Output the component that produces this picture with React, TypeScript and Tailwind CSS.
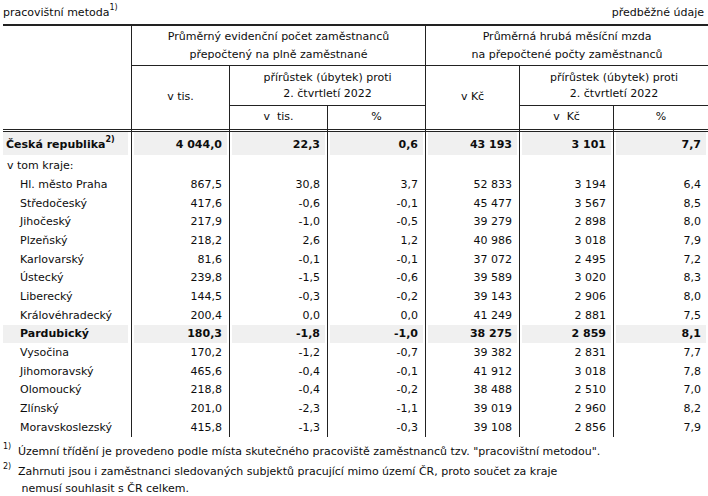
type Row = {
  name: string;
  values: string[];
  bold?: boolean;
};

const rows: Row[] = [
  { name: "Hl. město Praha", values: ["867,5", "30,8", "3,7", "52 833", "3 194", "6,4"] },
  { name: "Středočeský", values: ["417,6", "-0,6", "-0,1", "45 477", "3 567", "8,5"] },
  { name: "Jihočeský", values: ["217,9", "-1,0", "-0,5", "39 279", "2 898", "8,0"] },
  { name: "Plzeňský", values: ["218,2", "2,6", "1,2", "40 986", "3 018", "7,9"] },
  { name: "Karlovarský", values: ["81,6", "-0,1", "-0,1", "37 072", "2 495", "7,2"] },
  { name: "Ústecký", values: ["239,8", "-1,5", "-0,6", "39 589", "3 020", "8,3"] },
  { name: "Liberecký", values: ["144,5", "-0,3", "-0,2", "39 143", "2 906", "8,0"] },
  { name: "Královéhradecký", values: ["200,4", "0,0", "0,0", "41 249", "2 881", "7,5"] },
  { name: "Pardubický", values: ["180,3", "-1,8", "-1,0", "38 275", "2 859", "8,1"], bold: true },
  { name: "Vysočina", values: ["170,2", "-1,2", "-0,7", "39 382", "2 831", "7,7"] },
  { name: "Jihomoravský", values: ["465,6", "-0,4", "-0,1", "41 912", "3 018", "7,8"] },
  { name: "Olomoucký", values: ["218,8", "-0,4", "-0,2", "38 488", "2 510", "7,0"] },
  { name: "Zlínský", values: ["201,0", "-2,3", "-1,1", "39 019", "2 960", "8,2"] },
  { name: "Moravskoslezský", values: ["415,8", "-1,3", "-0,3", "39 108", "2 856", "7,9"] },
];

const line = "border-[#222]";

function Sup({ children }: { children: React.ReactNode }) {
  return <sup className="relative -top-[1px] align-super text-[8px] leading-none">{children}</sup>;
}

function RegionRow({ row }: { row: Row }) {
  const shade = row.bold ? "bg-[#f0f0f0]" : "";
  return (
    <tr className={`h-[18.7px] ${row.bold ? "font-bold" : ""}`}>
      <td className="p-0">
        <div className={`mr-[3px] pl-[17px] leading-[18px] ${shade}`}>{row.name}</div>
      </td>
      {row.values.map((v, i) => (
        <td key={i} className={`border-l p-0 ${line}`}>
          <div className={`mx-[2px] pr-[5px] text-right leading-[18px] ${shade}`}>{v}</div>
        </td>
      ))}
    </tr>
  );
}

export default function App() {
  return (
    <div className="w-[708px] bg-white font-['DejaVu_Sans',sans-serif] text-[11px] text-[#0d0d0d]">
      <div className="flex h-[24px] items-end justify-between pb-[4px] pl-[3px] pr-[4px] leading-[14px]">
        <span>
          pracovištní metoda<Sup>1)</Sup>
        </span>
        <span>předběžné údaje</span>
      </div>

      <table className={`ml-[3px] w-[705px] table-fixed border-separate border-spacing-0 border-t-2 ${line}`}>
        <colgroup>
          <col className="w-[128px]" />
          <col className="w-[98px]" />
          <col className="w-[98px]" />
          <col className="w-[98px]" />
          <col className="w-[94px]" />
          <col className="w-[94px]" />
          <col className="w-[95px]" />
        </colgroup>
        <thead>
          <tr className="h-[40px]">
            <th rowSpan={3} className="p-0" />
            <th colSpan={3} className={`border-b border-l p-0 font-normal leading-[18px] ${line}`}>
              Průměrný evidenční počet zaměstnanců
              <br />
              přepočtený na plně zaměstnané
            </th>
            <th colSpan={3} className={`border-b border-l p-0 font-normal leading-[18px] ${line}`}>
              Průměrná hrubá měsíční mzda
              <br />
              na přepočtené počty zaměstnanců
            </th>
          </tr>
          <tr className="h-[40px]">
            <th rowSpan={2} className={`border-l p-0 font-normal ${line}`}>
              v tis.
            </th>
            <th colSpan={2} className={`border-b border-l p-0 font-normal leading-[16px] ${line}`}>
              přírůstek (úbytek) proti
              <br />
              2. čtvrtletí 2022
            </th>
            <th rowSpan={2} className={`border-l p-0 font-normal ${line}`}>
              v Kč
            </th>
            <th colSpan={2} className={`border-b border-l p-0 font-normal leading-[16px] ${line}`}>
              přírůstek (úbytek) proti
              <br />
              2. čtvrtletí 2022
            </th>
          </tr>
          <tr className="h-[23px]">
            <th className={`border-l p-0 font-normal ${line}`}>v&nbsp; tis.</th>
            <th className={`border-l p-0 font-normal ${line}`}>%</th>
            <th className={`border-l p-0 font-normal ${line}`}>v&nbsp; Kč</th>
            <th className={`border-l p-0 font-normal ${line}`}>%</th>
          </tr>
        </thead>
        <tbody>
          <tr className="h-[28px] align-top font-bold">
            <td className={`border-t-[3px] border-double p-0 ${line}`}>
              <div className="mr-[3px] flex h-[23px] items-center bg-[#f0f0f0] pl-[3px] pt-[3px]">
                <span>
                  Česká republika<Sup>2)</Sup>
                </span>
              </div>
            </td>
            {["4 044,0", "22,3", "0,6", "43 193", "3 101", "7,7"].map((v, i) => (
              <td key={i} className={`border-l border-t-[3px] border-double p-0 ${line}`}>
                <div className="mx-[2px] flex h-[23px] items-center justify-end bg-[#f0f0f0] pr-[5px] pt-[3px]">
                  {v}
                </div>
              </td>
            ))}
          </tr>
          <tr className="h-[18.5px]">
            <td className="p-0 pl-[4px] leading-[18px]">v tom kraje:</td>
            {[0, 1, 2, 3, 4, 5].map((i) => (
              <td key={i} className={`border-l p-0 ${line}`} />
            ))}
          </tr>
          {rows.map((r) => (
            <RegionRow key={r.name} row={r} />
          ))}
        </tbody>
      </table>

      <div className="mt-[6px] pl-[3px] leading-[17px]">
        <p className="flex">
          <span className="w-[15px] shrink-0">
            <Sup>1)</Sup>
          </span>
          <span>
            Územní třídění je provedeno podle místa skutečného pracoviště zaměstnanců tzv. "pracovištní metodou".
          </span>
        </p>
        <p className="mt-[3px] flex">
          <span className="w-[15px] shrink-0">
            <Sup>2)</Sup>
          </span>
          <span>
            Zahrnuti jsou i zaměstnanci sledovaných subjektů pracující mimo území ČR, proto součet za kraje
            <br />
            &nbsp;nemusí souhlasit s ČR celkem.
          </span>
        </p>
      </div>
    </div>
  );
}
